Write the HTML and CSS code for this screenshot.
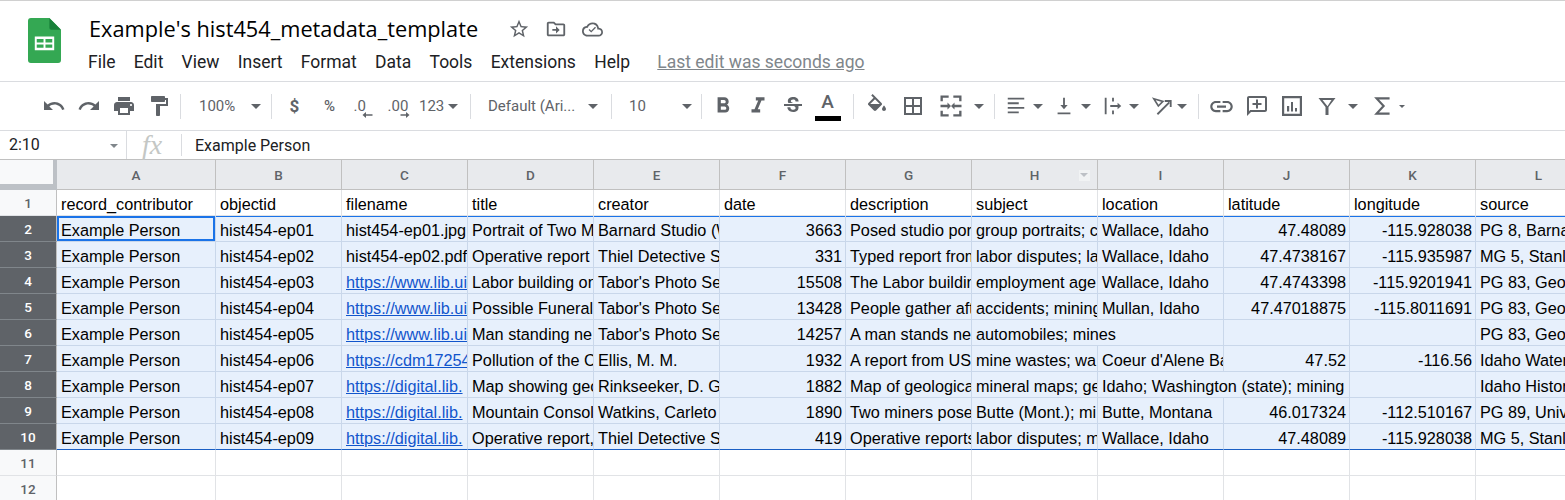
FILE: index.html
```html
<!DOCTYPE html>
<html lang="en">
<head>
    <meta charset="UTF-8">
    <title>Example's hist454_metadata_template</title>
    <link rel="stylesheet" href="styles.css">
</head>
<body>
    <header class="doc-header">
        <svg class="sheets-logo" width="33" height="45" viewBox="0 0 34 46" preserveAspectRatio="none">
            <path d="M3 0H22L34 12V43a3 3 0 0 1-3 3H3a3 3 0 0 1-3-3V3a3 3 0 0 1 3-3z" fill="#34a853"/>
            <path d="M22 0L34 12H24a2 2 0 0 1-2-2z" fill="#188038"/>
            <path d="M7 19H27V33H7zM9 21.500V25H16V21.500zM18 21.500V25H25V21.500zM9 27V30.500H16V27zM18 27V30.500H25V27z" fill="#fff" fill-rule="evenodd"/>
        </svg>
        <div class="doc-info">
            <div class="title-row">
                <span class="doc-title">Example's hist454_metadata_template</span>
                <svg class="title-icon" width="22" height="22" viewBox="0 0 24 24"><path d="M22 9.240l-7.190-.620L12 2 9.190 8.630 2 9.240l5.460 4.730L5.820 21 12 17.270 18.180 21l-1.630-7.030L22 9.240zM12 15.400l-3.760 2.270 1-4.280-3.320-2.880 4.380-.38L12 6.100l1.710 4.040 4.380.38-3.320 2.880 1 4.280L12 15.400z" fill="#5f6368"/></svg>
                <svg class="title-icon" width="22" height="22" viewBox="0 0 24 24"><path d="M20 6h-8l-2-2H4c-1.100 0-2 .9-2 2v12c0 1.100.9 2 2 2h16c1.100 0 2-.9 2-2V8c0-1.100-.9-2-2-2zm0 12H4V6h5.170l2 2H20v10zm-8-4H8v-2h4V9l4 4-4 4v-3z" fill="#5f6368"/></svg>
                <svg class="title-icon cloud-icon" width="21" height="21" viewBox="0 0 24 24"><path d="M19.350 10.040A7.490 7.490 0 0 0 12 4C9.110 4 6.600 5.640 5.350 8.040A5.994 5.994 0 0 0 0 14c0 3.310 2.690 6 6 6h13c2.760 0 5-2.240 5-5 0-2.640-2.050-4.780-4.650-4.960zM19 18H6c-2.210 0-4-1.790-4-4s1.790-4 4-4h.71C7.370 7.690 9.480 6 12 6c3.040 0 5.500 2.460 5.500 5.500v.5H19c1.660 0 3 1.340 3 3s-1.340 3-3 3zm-8.500-2.500l-3-3 1.100-1.100 1.900 1.900 4.400-4.400 1.100 1.100z" fill="#5f6368"/></svg>
            </div>
            <nav class="menu-row">
                <span class="menu-item">File</span>
                <span class="menu-item">Edit</span>
                <span class="menu-item">View</span>
                <span class="menu-item">Insert</span>
                <span class="menu-item">Format</span>
                <span class="menu-item">Data</span>
                <span class="menu-item">Tools</span>
                <span class="menu-item">Extensions</span>
                <span class="menu-item">Help</span>
                <span class="last-edit">Last edit was seconds ago</span>
            </nav>
        </div>
    </header>

    <div class="toolbar">
        <span class="tb"><svg width="24" height="24" viewBox="0 0 24 24"><path d="M12.500 8c-2.650 0-5.050.99-6.900 2.600L2 7v9h9l-3.620-3.620c1.390-1.160 3.160-1.880 5.120-1.880 3.540 0 6.550 2.310 7.600 5.500l2.370-.78C21.080 11.030 17.150 8 12.500 8z" fill="#5f6368"/></svg></span>
        <span class="tb"><svg width="24" height="24" viewBox="0 0 24 24"><path d="M18.400 10.600C16.550 8.990 14.150 8 11.500 8c-4.650 0-8.580 3.030-9.960 7.220L3.900 16c1.050-3.190 4.050-5.500 7.600-5.500 1.950 0 3.730.72 5.120 1.880L13 16h9V7l-3.600 3.600z" fill="#5f6368"/></svg></span>
        <span class="tb"><svg width="24" height="24" viewBox="0 0 24 24"><path d="M19 8H5c-1.660 0-3 1.340-3 3v6h4v4h12v-4h4v-6c0-1.660-1.340-3-3-3zm-3 11H8v-5h8v5zm3-7c-.55 0-1-.45-1-1s.45-1 1-1 1 .45 1 1-.45 1-1 1zm-1-9H6v4h12V3z" fill="#5f6368"/></svg></span>
        <span class="tb"><svg width="24" height="24" viewBox="0 0 24 24"><path d="M18 4V3c0-.55-.45-1-1-1H5c-.55 0-1 .45-1 1v4c0 .55.45 1 1 1h12c.55 0 1-.45 1-1V6h1v4H9v11c0 .55.45 1 1 1h2c.55 0 1-.45 1-1v-9h8V4h-3z" fill="#5f6368"/></svg></span>
        <span class="tb-sep sep-paint"></span>
        <span class="tb-text zoom-box">100%</span>
        <span class="caret"></span>
        <span class="tb-sep sep-zoom"></span>
        <span class="tb tb-text tb-bold">$</span>
        <span class="tb tb-text tb-pct">%</span>
        <span class="tb"><svg width="30" height="24" viewBox="0 0 30 24"><text x="3.500" y="16.500" class="dec-text">.0</text><path d="M22.500 21H14.500" stroke="#5f6368" stroke-width="1.500"/><path d="M12.500 21l3.500-3v6z" fill="#5f6368"/></svg></span>
        <span class="tb"><svg width="34" height="24" viewBox="0 0 34 24"><text x="4.500" y="16.500" class="dec-text">.00</text><path d="M17.500 21H24.500" stroke="#5f6368" stroke-width="1.500"/><path d="M26.500 21l-3.500-3v6z" fill="#5f6368"/></svg></span>
        <span class="tb-text num-format">123</span>
        <span class="caret caret-num"></span>
        <span class="tb-sep sep-num"></span>
        <span class="tb-text font-box">Default (Ari...</span>
        <span class="caret"></span>
        <span class="tb-sep sep-font"></span>
        <span class="tb-text size-box">10</span>
        <span class="caret"></span>
        <span class="tb-sep sep-size"></span>
        <span class="tb tb-first"><svg width="26" height="26" viewBox="0 0 24 24"><path d="M15.600 10.790c.97-.67 1.650-1.770 1.650-2.790 0-2.260-1.750-4-4-4H7v14h7.040c2.090 0 3.710-1.700 3.710-3.790 0-1.520-.86-2.820-2.150-3.420zM10 6.500h3c.83 0 1.500.67 1.500 1.500s-.67 1.500-1.500 1.500h-3v-3zm3.500 9H10v-3h3.500c.83 0 1.500.67 1.500 1.500s-.67 1.500-1.500 1.500z" fill="#5f6368"/></svg></span>
        <span class="tb"><svg width="26" height="26" viewBox="0 0 24 24"><path d="M10 4v3h2.210l-3.420 8H6v3h8v-3h-2.210l3.420-8H18V4z" fill="#5f6368"/></svg></span>
        <span class="tb"><svg width="24" height="24" viewBox="0 0 24 24"><path d="M6.850 7.080C6.850 4.370 9.450 3 12.240 3c1.640 0 3 .49 3.900 1.280.77.65 1.460 1.730 1.460 3.240h-3.010c0-.31-.05-.59-.15-.85-.29-.86-1.200-1.280-2.250-1.280-1.860 0-2.340 1.020-2.340 1.700 0 .48.25.88.74 1.210.38.25.77.48 1.410.7H7.390c-.21-.34-.54-.89-.54-1.920zM21 12v-2H3v2h9.620c1.150.45 1.960.75 1.960 1.970 0 1-.81 1.670-2.280 1.670-1.540 0-2.930-.54-2.930-2.510H6.400c0 .55.08 1.130.24 1.580.81 2.290 3.320 3.300 5.670 3.300 2.350 0 5.190-1.010 5.190-4.510 0-.48-.02-.8-.12-1.500H21z" fill="#5f6368"/></svg></span>
        <span class="tb text-color">
            <span class="text-color-a">A</span>
            <span class="text-color-bar"></span>
        </span>
        <span class="tb-sep sep-color"></span>
        <span class="tb tb-fill"><svg width="24" height="24" viewBox="0 0 24 24"><path d="M16.560 8.940L7.620 0 6.210 1.410l2.380 2.380-5.150 5.150c-.59.59-.59 1.540 0 2.120l5.500 5.500c.29.29.68.44 1.060.44s.77-.15 1.060-.44l5.500-5.500c.59-.58.59-1.530 0-2.120zM5.210 10L10 5.210 14.790 10H5.210zM19 11.500s-2 2.170-2 3.500c0 1.100.9 2 2 2s2-.9 2-2c0-1.330-2-3.500-2-3.500z" fill="#5f6368"/></svg></span>
        <span class="tb tb-borders"><svg width="24" height="24" viewBox="0 0 24 24"><path d="M3 3v18h18V3H3zm8 16H5v-6h6v6zm0-8H5V5h6v6zm8 8h-6v-6h6v6zm0-8h-6V5h6v6z" fill="#5f6368"/></svg></span>
        <span class="tb tb-merge"><svg width="28" height="28" viewBox="0 0 24 24"><path d="M3 3h7v2H5v3H3zM14 3h7v5h-2V5h-5zM3 16h2v3h5v2H3zM19 16h2v5h-7v-2h5zM3 11h6V9l3 3-3 3v-2H3zM21 13h-6v2l-3-3 3-3v2h6z" fill="#5f6368"/></svg></span>
        <span class="caret caret-merge"></span>
        <span class="tb-sep sep-merge"></span>
        <span class="tb-sm tb-align"><svg width="24" height="24" viewBox="0 0 24 24"><path d="M3 3h18v2H3zM3 8h12v2H3zM3 13h18v2H3zM3 18h12v2H3z" fill="#5f6368"/></svg></span>
        <span class="caret caret-tight"></span>
        <span class="tb-sm tb-valign"><svg width="24" height="24" viewBox="0 0 24 24"><path d="M5 19h14v2H5zM16 11h-3V3h-2v8H8l4 4.500z" fill="#5f6368"/></svg></span>
        <span class="caret caret-tight"></span>
        <span class="tb-sm tb-wrap"><svg width="24" height="24" viewBox="0 0 24 24"><path d="M3 3h2v18H3zM11 3h2v4h-2zM11 17h2v4h-2zM9 11h8V8.500l4 3.500-4 3.500V13H9z" fill="#5f6368"/></svg></span>
        <span class="caret caret-wrap"></span>
        <span class="tb-sm tb-rotate"><svg width="24" height="24" viewBox="0 0 24 24"><path d="M3 4L13 7 8 12z" fill="none" stroke="#5f6368" stroke-width="1.800"/><path d="M7 21L20 8" fill="none" stroke="#5f6368" stroke-width="2"/><path d="M15 6.500h6.500V13" fill="none" stroke="#5f6368" stroke-width="2"/></svg></span>
        <span class="caret caret-rotate"></span>
        <span class="tb-sep sep-rotate"></span>
        <span class="tb tb-link"><svg width="27" height="27" viewBox="0 0 24 24"><path d="M3.900 12c0-1.710 1.390-3.100 3.100-3.100h4V7H7c-2.760 0-5 2.240-5 5s2.240 5 5 5h4v-1.900H7c-1.710 0-3.100-1.390-3.100-3.100zM8 13h8v-2H8v2zm9-6h-4v1.900h4c1.710 0 3.100 1.390 3.100 3.100s-1.390 3.100-3.100 3.100h-4V17h4c2.760 0 5-2.240 5-5s-2.240-5-5-5z" fill="#5f6368"/></svg></span>
        <span class="tb"><svg width="24" height="24" viewBox="0 0 24 24"><path d="M20 2H4c-1.100 0-2 .9-2 2v18l4-4h14c1.100 0 2-.9 2-2V4c0-1.100-.9-2-2-2zm0 14H5.200L4 17.200V4h16v12zM11 5.500h2V9h3.500v2H13v3.500h-2V11H7.500V9H11z" fill="#5f6368"/></svg></span>
        <span class="tb"><svg width="24" height="24" viewBox="0 0 24 24"><path d="M2 2h20v20H2zm2.200 2.200v15.600h15.600V4.200zM7 12h2.200v5.500H7zM11 8h2v9.500h-2zM15 14h2v3.500h-2z" fill="#5f6368" fill-rule="evenodd"/></svg></span>
        <span class="tb"><svg width="24" height="24" viewBox="0 0 24 24"><path d="M3.500 4h17l-7 9v8h-3v-8zM7.500 6l5 6.300L16.500 6z" fill="#5f6368" fill-rule="evenodd"/></svg></span>
        <span class="caret caret-filter"></span>
        <span class="tb tb-sigma"><svg width="26" height="26" viewBox="0 0 24 24"><path d="M19 5H7l6.500 7L7 19h12" fill="none" stroke="#5f6368" stroke-width="2"/></svg></span>
        <span class="caret caret-small"></span>
    </div>

    <div class="formula-bar">
        <div class="name-box">2:10<span class="caret caret-name"></span></div>
        <div class="fx-box">fx</div>
        <div class="formula-text">Example Person</div>
    </div>

    <div class="grid-wrap">
        <table class="grid">
            <colgroup>
                <col class="col-row"><col class="col-a"><col class="col-n"><col class="col-n"><col class="col-n"><col class="col-n"><col class="col-n"><col class="col-n"><col class="col-n"><col class="col-n"><col class="col-n"><col class="col-n"><col class="col-n">
            </colgroup>
            <tr class="head-row">
                <th class="corner"></th><th>A</th><th>B</th><th>C</th><th>D</th><th>E</th><th>F</th><th>G</th><th class="has-filter">H<span class="filter-btn"></span></th><th>I</th><th>J</th><th>K</th><th>L</th>
            </tr>
            <tr>
                <td class="rownum">1</td><td>record_contributor</td><td>objectid</td><td>filename</td><td>title</td><td>creator</td><td>date</td><td>description</td><td>subject</td><td>location</td><td>latitude</td><td>longitude</td><td>source</td>
            </tr>
            <tr class="sel first-sel">
                <td class="rownum">2</td><td class="active">Example Person</td><td>hist454-ep01</td><td>hist454-ep01.jpg</td><td>Portrait of Two M</td><td>Barnard Studio (W</td><td class="num">3663</td><td>Posed studio por</td><td>group portraits; c</td><td>Wallace, Idaho</td><td class="num">47.48089</td><td class="num">-115.928038</td><td>PG 8, Barna</td>
            </tr>
            <tr class="sel">
                <td class="rownum">3</td><td>Example Person</td><td>hist454-ep02</td><td>hist454-ep02.pdf</td><td>Operative report t</td><td>Thiel Detective S</td><td class="num">331</td><td>Typed report from</td><td>labor disputes; la</td><td>Wallace, Idaho</td><td class="num">47.4738167</td><td class="num">-115.935987</td><td>MG 5, Stanl</td>
            </tr>
            <tr class="sel">
                <td class="rownum">4</td><td>Example Person</td><td>hist454-ep03</td><td><a href="#">https://www.lib.ui</a></td><td>Labor building on</td><td>Tabor's Photo Se</td><td class="num">15508</td><td>The Labor buildin</td><td>employment age</td><td>Wallace, Idaho</td><td class="num">47.4743398</td><td class="num">-115.9201941</td><td>PG 83, Geo</td>
            </tr>
            <tr class="sel">
                <td class="rownum">5</td><td>Example Person</td><td>hist454-ep04</td><td><a href="#">https://www.lib.ui</a></td><td>Possible Funeral</td><td>Tabor's Photo Se</td><td class="num">13428</td><td>People gather aft</td><td>accidents; mining</td><td>Mullan, Idaho</td><td class="num">47.47018875</td><td class="num">-115.8011691</td><td>PG 83, Geo</td>
            </tr>
            <tr class="sel">
                <td class="rownum">6</td><td>Example Person</td><td>hist454-ep05</td><td><a href="#">https://www.lib.ui</a></td><td>Man standing ne</td><td>Tabor's Photo Se</td><td class="num">14257</td><td>A man stands ne</td><td colspan="2">automobiles; mines</td><td></td><td></td><td>PG 83, Geo</td>
            </tr>
            <tr class="sel">
                <td class="rownum">7</td><td>Example Person</td><td>hist454-ep06</td><td><a href="#">https://cdm17254</a></td><td>Pollution of the C</td><td>Ellis, M. M.</td><td class="num">1932</td><td>A report from US</td><td>mine wastes; wa</td><td>Coeur d'Alene Ba</td><td class="num">47.52</td><td class="num">-116.56</td><td>Idaho Water</td>
            </tr>
            <tr class="sel">
                <td class="rownum">8</td><td>Example Person</td><td>hist454-ep07</td><td><a href="#">https://digital.lib.</a></td><td>Map showing geo</td><td>Rinkseeker, D. G</td><td class="num">1882</td><td>Map of geologica</td><td>mineral maps; ge</td><td colspan="2">Idaho; Washington (state); mining</td><td></td><td>Idaho Histor</td>
            </tr>
            <tr class="sel">
                <td class="rownum">9</td><td>Example Person</td><td>hist454-ep08</td><td><a href="#">https://digital.lib.</a></td><td>Mountain Consol</td><td>Watkins, Carleto</td><td class="num">1890</td><td>Two miners pose</td><td>Butte (Mont.); mi</td><td>Butte, Montana</td><td class="num">46.017324</td><td class="num">-112.510167</td><td>PG 89, Univ</td>
            </tr>
            <tr class="sel last-sel">
                <td class="rownum">10</td><td>Example Person</td><td>hist454-ep09</td><td><a href="#">https://digital.lib.</a></td><td>Operative report,</td><td>Thiel Detective S</td><td class="num">419</td><td>Operative reports</td><td>labor disputes; m</td><td>Wallace, Idaho</td><td class="num">47.48089</td><td class="num">-115.928038</td><td>MG 5, Stanl</td>
            </tr>
            <tr>
                <td class="rownum">11</td><td></td><td></td><td></td><td></td><td></td><td></td><td></td><td></td><td></td><td></td><td></td><td></td>
            </tr>
            <tr>
                <td class="rownum">12</td><td></td><td></td><td></td><td></td><td></td><td></td><td></td><td></td><td></td><td></td><td></td><td></td>
            </tr>
        </table>
    </div>
</body>
</html>
```

FILE: styles.css
```css
* {
    box-sizing: border-box;
}

body {
    margin: 0;
    height: 500px;
    overflow: hidden;
    background-color: #fff;
    font-family: "Liberation Sans", Arial, sans-serif;
    color: #000;
}

.doc-header {
    display: flex;
    height: 82px;
    padding-left: 28px;
    border-top: 1px solid #d0d0d0;
    border-bottom: 1px solid #dadce0;
}

.sheets-logo {
    margin-top: 17px;
}

.doc-info {
    margin-left: 28px;
}

.title-row {
    display: flex;
    align-items: center;
    height: 44px;
    padding-top: 11px;
}

.doc-title {
    font-family: "Open Sans", sans-serif;
    font-size: 21.750px;
    color: #000;
    margin-right: 30px;
}

.title-icon {
    margin-right: 15px;
}

.cloud-icon {
    margin-top: 1px;
}

.menu-row {
    display: flex;
    align-items: center;
    height: 31px;
    margin-left: -1px;
    padding-top: 3px;
    font-family: Roboto, sans-serif;
    font-size: 17.500px;
    color: #202124;
}

.menu-item {
    margin-right: 18.250px;
}

.last-edit {
    margin-left: 9px;
    color: #80868b;
    text-decoration: underline;
}

.toolbar {
    display: flex;
    align-items: center;
    height: 49px;
    padding-left: 36px;
    border-bottom: 1px solid #dadce0;
    font-family: Roboto, sans-serif;
    font-size: 15px;
    color: #5f6368;
}

.tb {
    display: flex;
    align-items: center;
    justify-content: center;
    width: 35px;
    height: 30px;
    flex: none;
}

.tb-sm {
    display: flex;
    align-items: center;
    justify-content: center;
    width: 22px;
    height: 30px;
    flex: none;
}

.tb-sep {
    width: 1px;
    height: 25px;
    background-color: #dadce0;
    flex: none;
}

.tb-text {
    color: #5f6368;
    white-space: nowrap;
}

.tb-bold {
    margin-left: 5px;
    font-weight: 700;
    font-size: 17px;
}

.tb-pct {
    font-weight: 500;
    font-size: 15px;
}

.dec-text {
    font-family: Roboto, sans-serif;
    font-size: 15px;
    fill: #5f6368;
}

.caret {
    width: 0;
    height: 0;
    flex: none;
    border-left: 5px solid transparent;
    border-right: 5px solid transparent;
    border-top: 5px solid #5f6368;
}

.sep-paint { margin-left: 4px; }
.zoom-box { margin-left: 18px; width: 52px; }
.sep-zoom { margin-left: 10px; }
.num-format { margin-left: 2px; width: 27px; }
.caret-num { margin-left: 2px; }
.sep-num { margin-left: 12px; }
.font-box { margin-left: 17px; width: 100px; }
.sep-font { margin-left: 13px; }
.size-box { margin-left: 17px; width: 53px; }
.sep-size { margin-left: 9px; }
.tb-first { margin-left: 3px; }
.sep-color { margin-left: 8px; }
.tb-fill { margin-left: 5px; }
.tb-borders { margin-left: 1px; }
.tb-merge { margin-left: 3px; }
.caret-merge { margin-left: 6px; }
.sep-merge { margin-left: 10px; }
.tb-align { margin-left: 10px; }
.caret-tight { margin-left: 6px; }
.tb-valign { margin-left: 10px; }
.tb-wrap { margin-left: 11px; }
.caret-wrap { margin-left: 5px; }
.tb-rotate { margin-left: 12px; }
.caret-rotate { margin-left: 4px; }
.sep-rotate { margin-left: 11px; }
.tb-link { margin-left: 5px; }
.caret-filter { margin-left: 4px; }
.tb-sigma { margin-left: 6px; }
.caret-small {
    border-left-width: 3px;
    border-right-width: 3px;
    border-top-width: 3px;
}

.text-color {
    flex-direction: column;
    justify-content: flex-start;
    padding-top: 1px;
}

.text-color-a {
    font-size: 19px;
    line-height: 20px;
    font-weight: 500;
}

.text-color-bar {
    width: 26px;
    height: 5px;
    margin-top: 4px;
    background-color: #000;
}

.formula-bar {
    display: flex;
    align-items: center;
    height: 29px;
    border-bottom: 1px solid #c0c0c0;
    font-family: Roboto, sans-serif;
    font-size: 16px;
}

.name-box {
    position: relative;
    width: 127px;
    height: 28px;
    padding: 4px 0 0 9px;
    border-right: 1px solid #dadce0;
    color: #202124;
}

.caret-name {
    position: absolute;
    right: 8px;
    top: 13px;
    border-left-width: 4px;
    border-right-width: 4px;
    border-top-width: 4px;
    border-top-color: #80868b;
}

.fx-box {
    width: 55px;
    height: 22px;
    border-right: 1px solid #dadce0;
    padding-left: 15px;
    font-family: "Liberation Serif", serif;
    font-style: italic;
    font-size: 28px;
    line-height: 22px;
    color: #c4c7c5;
}

.formula-text {
    margin-left: 13px;
    color: #202124;
}

.grid-wrap {
    overflow: hidden;
    width: 1565px;
}

.grid {
    table-layout: fixed;
    width: 1602px;
    border-collapse: separate;
    border-spacing: 0;
    font-size: 16.250px;
}

.col-row { width: 57px; }
.col-a { width: 159px; }
.col-n { width: 126px; }

.head-row th {
    height: 30px;
    background-color: #e8eaed;
    border-right: 1px solid #c0c0c0;
    border-bottom: 1px solid #c0c0c0;
    font-family: Roboto, sans-serif;
    font-size: 13.500px;
    font-weight: 500;
    color: #5f6368;
    padding: 0;
}

.head-row .corner {
    background-color: #f8f9fa;
    border-bottom: 6px solid #bdc1c6;
    border-right: 4px solid #bdc1c6;
}

.has-filter {
    position: relative;
}

.filter-btn {
    position: absolute;
    right: 6px;
    top: 9px;
    width: 13px;
    height: 13px;
    background-color: #f1f3f4;
    border: 1px solid #e8eaed;
}

.filter-btn::after {
    content: "";
    position: absolute;
    left: 1px;
    top: 3px;
    border-left: 4px solid transparent;
    border-right: 4px solid transparent;
    border-top: 4px solid #bdc1c6;
}

.grid td {
    height: 26px;
    padding: 4px 0 0 4px;
    border-right: 1px solid #e1e3e6;
    border-bottom: 1px solid #e1e3e6;
    white-space: nowrap;
    overflow: hidden;
    color: #000;
    line-height: 21px;
}

.grid .num {
    padding-right: 3px;
    text-align: right;
}

.grid a {
    color: #1155cc;
}

.grid .rownum {
    padding: 1px 0 0;
    line-height: 24px;
    text-align: center;
    background-color: #f8f9fa;
    border-right: 1px solid #c0c0c0;
    font-family: Roboto, sans-serif;
    font-size: 13.500px;
    font-weight: 500;
    color: #5f6368;
}

.grid .sel td {
    background-color: #e7f0fc;
    border-right-color: #c9d7ea;
    border-bottom-color: #c9d7ea;
}

.grid .sel .rownum {
    background-color: #5f6368;
    color: #fff;
    border-right-color: #c0c0c0;
    border-bottom-color: #80868b;
}

.first-sel td:not(.rownum) {
    box-shadow: inset 0 1px 0 #1a73e8;
}

.grid .last-sel td:not(.rownum) {
    border-bottom-color: #1a5fc4;
}

.first-sel td.active:not(.rownum) {
    box-shadow: inset 0 0 0 2px #1a73e8;
}
```
